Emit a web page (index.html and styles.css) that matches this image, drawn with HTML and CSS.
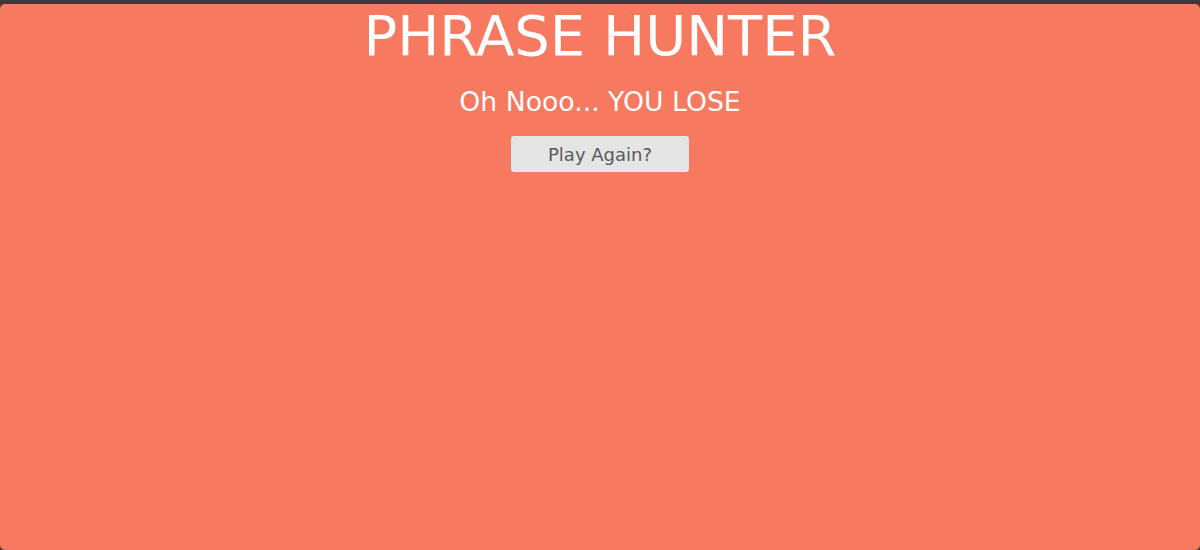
FILE: index.html
```html
<!DOCTYPE html>
<html lang="en">
<head>
<meta charset="utf-8">
<title>Phrase Hunter</title>
<link rel="stylesheet" href="styles.css">
</head>
<body>
<div class="topbar"></div>
<div class="overlay lose">
  <h2 class="title">PHRASE HUNTER</h2>
  <h1 class="game-over-message">Oh Nooo... YOU LOSE</h1>
  <button class="btn-reset">Play Again?</button>
</div>
</body>
</html>
```
FILE: styles.css
```css
html, body {
  margin: 0;
  padding: 0;
  height: 100%;
}
body {
  background: #3a3a3a;
  font-family: "DejaVu Sans", "Noto Sans", sans-serif;
  display: flex;
  flex-direction: column;
}
.topbar {
  height: 4px;
  flex: none;
}
.overlay {
  flex: 1;
  background: #f67960;
  border-radius: 5px;
  display: flex;
  flex-direction: column;
  align-items: center;
  color: #fff;
}
.title {
  margin: 2px 0 0;
  font-size: 56px;
  font-weight: 400;
  line-height: 60px;
}
.game-over-message {
  margin: 20px 0 0;
  font-size: 26.7px;
  font-weight: 400;
  line-height: 32px;
}
.btn-reset {
  margin-top: 18px;
  width: 178px;
  height: 36px;
  border: none;
  border-radius: 3px;
  background: #e5e5e5;
  color: #58595e;
  font-family: inherit;
  font-size: 18px;
  padding: 0;
}
```
